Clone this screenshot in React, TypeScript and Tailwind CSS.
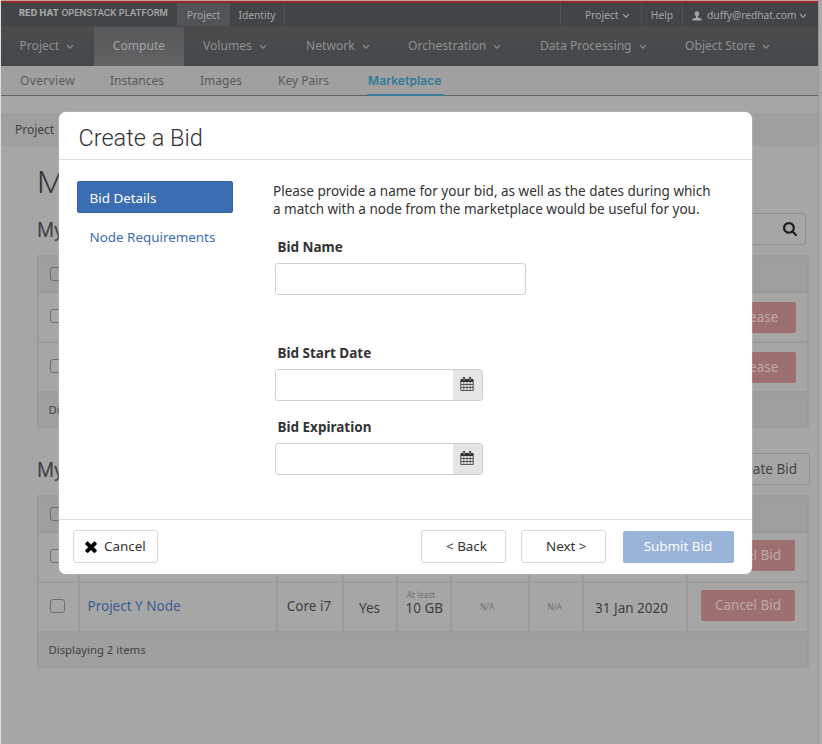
import React from 'react';
import { clsx } from 'clsx';

function Chevron({ className = '' }: { className?: string }) {
  return (
    <svg className={clsx('h-[6px] w-[8px] shrink-0', className)} viewBox="0 0 8 6" fill="none" stroke="currentColor" strokeWidth="1.2">
      <path d="M1 1.2 4 4.2 7 1.2" />
    </svg>
  );
}

function CalendarIcon() {
  return (
    <svg className="h-[14px] w-[14px] text-[#333]" viewBox="0 0 14 14">
      <path
        fill="currentColor"
        fillRule="evenodd"
        d="M1.4 1.9H2.7V1.5Q2.7.1 4 .1T5.3 1.5V1.9H8.7V1.5Q8.7.1 10 .1T11.3 1.5V1.9H12.6Q13.6 1.9 13.6 2.9V13Q13.6 14 12.6 14H1.4Q.4 14 .4 13V2.9Q.4 1.9 1.4 1.9ZM3.6 1.3V3.3H4.4V1.3ZM9.6 1.3V3.3H10.4V1.3ZM1.3 5V7.3H3.6V5ZM4.2 5V7.3H6.7V5ZM7.3 5V7.3H9.8V5ZM10.4 5V7.3H12.7V5ZM1.3 7.9V10.3H3.6V7.9ZM4.2 7.9V10.3H6.7V7.9ZM7.3 7.9V10.3H9.8V7.9ZM10.4 7.9V10.3H12.7V7.9ZM1.3 10.9V13.2H3.6V10.9ZM4.2 10.9V13.2H6.7V10.9ZM7.3 10.9V13.2H9.8V10.9ZM10.4 10.9V13.2H12.7V10.9Z"
      />
    </svg>
  );
}

function SearchIcon() {
  return (
    <svg className="h-[14px] w-[14px] text-[#1f1f1f]" viewBox="64 128 1664 1664" fill="currentColor">
      <path d="M1216 832q0-185-131.5-316.5t-316.5-131.5-316.5 131.5-131.5 316.5 131.5 316.5 316.5 131.5 316.5-131.5 131.5-316.5zm512 832q0 52-38 90t-90 38q-54 0-90-38l-343-342q-179 124-399 124-143 0-273.5-55.5t-225-150-150-225-55.5-273.5 55.5-273.5 150-225 225-150 273.5-55.5 273.5 55.5 225 150 150 225 55.5 273.5q0 220-124 399l343 343q37 37 37 90z" />
    </svg>
  );
}

function CloseIcon() {
  return (
    <svg className="h-[12px] w-[12px] text-black" viewBox="260 300 1270 1270" fill="currentColor" stroke="currentColor" strokeWidth="50">
      <path d="M1490 1322q0 40-28 68l-136 136q-28 28-68 28t-68-28l-294-294-294 294q-28 28-68 28t-68-28l-136-136q-28-28-28-68t28-68l294-294-294-294q-28-28-28-68t28-68l136-136q28-28 68-28t68 28l294 294 294-294q28-28 68-28t68 28l136 136q28 28 28 68t-28 68l-294 294 294 294q28 28 28 68z" />
    </svg>
  );
}

function UserIcon() {
  return (
    <svg className="h-[10px] w-[10px]" viewBox="0 0 10 10" fill="currentColor">
      <path d="M5 .2C6.5.2 7.2 1.2 7.2 2.5 7.2 3.9 6.6 4.9 5.9 5.3V6.6L8.8 7.4Q9.6 7.7 9.6 8.5V9.5H.4V8.5Q.4 7.7 1.2 7.4L4.1 6.6V5.3C3.4 4.9 2.8 3.9 2.8 2.5 2.8 1.2 3.5.2 5 .2Z" />
    </svg>
  );
}

function TopBar() {
  return (
    <div className="flex h-[23px] items-stretch bg-[#414547] text-[10.25px] text-[#a3a4a5]">
      <div className="flex w-[176px] items-center gap-[2.5px] whitespace-nowrap pb-[3px] pl-[18px] font-['Inter',sans-serif] text-[9px] text-[#a5a6a6]">
        <span className="font-extrabold tracking-[0.15px]">RED HAT</span>
        <span className="font-semibold">OPENSTACK PLATFORM</span>
      </div>
      <div className="flex w-[53px] items-center justify-center bg-[#505457] pt-[2px]">Project</div>
      <div className="flex w-[55px] items-center justify-center border-r border-[#4d5153] pt-[2px]">Identity</div>
      <div className="ml-auto flex w-[82px] items-center border-x border-[#4d5153] pt-[2px] pl-[24px]">
        Project
        <Chevron className="ml-1" />
      </div>
      <div className="flex w-[41px] items-center justify-center border-r border-[#4d5153] pt-[2px]">Help</div>
      <div className="flex w-[135px] items-center pt-[2px] pl-[9px]">
        <UserIcon />
        <span className="ml-[5px]">duffy@redhat.com</span>
        <Chevron className="ml-[3px]" />
      </div>
    </div>
  );
}

const menus = [
  { label: 'Volumes', width: 'w-[103px]' },
  { label: 'Network', width: 'w-[102px]' },
  { label: 'Orchestration', width: 'w-[132px]' },
  { label: 'Data Processing', width: 'w-[145px]' },
  { label: 'Object Store', width: 'w-[100px]' },
];

function MainNav() {
  return (
    <div className="flex h-[40px] items-stretch overflow-hidden border-t border-[#47494a] bg-linear-to-b from-[#4b4b4c] to-[#43484b] text-[12.1px] text-[#8e9091]">
      <div className="flex w-[93px] items-center pl-[18.5px]">
        Project
        <Chevron className="ml-[7px]" />
      </div>
      <div className="mr-[19px] flex w-[90px] items-center justify-center bg-linear-to-b from-[#575859] to-[#626365] text-[#a1a2a2]">Compute</div>
      {menus.map((m) => (
        <div key={m.label} className={clsx('flex items-center whitespace-nowrap', m.width)}>
          {m.label}
          <Chevron className="ml-[7px]" />
        </div>
      ))}
    </div>
  );
}

function SubNav() {
  return (
    <div className="flex h-[30px] items-center border-b border-[#616465] bg-[#a0a0a0] pl-[19px] text-[12px] text-[#585b5d]">
      <span className="w-[90px] tracking-[0.35px]">Overview</span>
      <span className="w-[90px]">Instances</span>
      <span className="w-[78px]">Images</span>
      <span className="w-[89px]">Key Pairs</span>
      <span className="-mb-px flex h-[30px] w-[77px] items-center border-b-2 border-[#3b7c99] pt-px pl-px font-['Inter',sans-serif] font-semibold tracking-[0.1px] text-[#34799a]">
        Marketplace
      </span>
    </div>
  );
}

function Checkbox() {
  return <span className="block h-[14px] w-[15px] rounded-[3px] border border-[#707070]" />;
}

function CheckCell() {
  return (
    <div className="flex w-[41px] items-center border-r-2 border-[#9b9b9b] pb-0.5 pl-[11px]">
      <Checkbox />
    </div>
  );
}

function RowButton({ children, className }: { children: string; className: string }) {
  return (
    <span className={clsx('flex h-[31px] items-center justify-center rounded-[2px] bg-[#9d6f6e] text-[13.5px] text-[#bcaaaa]', className)}>
      {children}
    </span>
  );
}

function TableFooter() {
  return <div className="flex h-[33px] items-center bg-[#9f9f9f] pt-px pl-[9.5px] text-[11.3px] text-[#434343]">Displaying 2 items</div>;
}

function NodesTable() {
  return (
    <div className="mt-[10px] flex h-[173px] w-[772px] flex-col border-2 border-[#9b9b9b]">
      <div className="flex h-[36px] border-b-2 border-[#989898] bg-[#9f9f9f]">
        <div className="flex w-[40px] items-center pl-[11px]">
          <Checkbox />
        </div>
      </div>
      {[0, 1].map((i) => (
        <div key={i} className="flex h-[50px] border-b-2 border-[#9b9b9b]">
          <CheckCell />
          <div className="ml-auto flex items-center pt-px pr-[11px]">
            <RowButton className="w-[84px]">Release</RowButton>
          </div>
        </div>
      ))}
      <TableFooter />
    </div>
  );
}

type Bid = { name?: string; cpu?: string; gpu?: string; memory?: string; disk?: string; nics?: string; expires?: string };

const bids: Bid[] = [
  {},
  { name: 'Project Y Node', cpu: 'Core i7', gpu: 'Yes', memory: '10 GB', disk: 'N/A', nics: 'N/A', expires: '31 Jan 2020' },
];

function BidsTable() {
  return (
    <div className="mt-[10px] flex h-[173px] w-[772px] flex-col border-2 border-[#9b9b9b]">
      <div className="flex h-[36px] border-b-2 border-[#989898] bg-[#9f9f9f] text-[13.5px] text-[#434343]">
        <div className="flex w-[40px] items-center pl-[11px]">
          <Checkbox />
        </div>
        <div className="ml-auto flex w-[113px] items-center pl-[11px]">Actions</div>
      </div>
      {bids.map((bid, i) => (
        <div key={i} className="flex h-[50px] border-b-2 border-[#9b9b9b] text-[13.5px] text-[#3f3f3f]">
          <CheckCell />
          <div className="flex w-[198px] items-center border-r-2 border-[#9b9b9b] pb-px pl-[7.5px] text-[#3d5d8c]">{bid.name}</div>
          <div className="flex w-[66px] items-center justify-center border-r-2 border-[#9b9b9b] pr-[2px] pb-px">{bid.cpu}</div>
          <div className="flex w-[54px] items-center justify-center border-r-2 border-[#9b9b9b] pt-[3px] pr-px">{bid.gpu}</div>
          <div className="flex w-[54px] flex-col border-r-2 border-[#9b9b9b] pt-[6px] pl-[7.5px]">
            {bid.memory && (
              <>
                <span className="pl-[1.5px] text-[8px] leading-[11px] text-[#707070]">At least</span>
                <span className="leading-[16px]">{bid.memory}</span>
              </>
            )}
          </div>
          <div className="flex w-[78px] items-center justify-center border-r-2 border-[#9b9b9b] pr-[6px] pb-px text-[8px] text-[#707070]">{bid.disk}</div>
          <div className="flex w-[54px] items-center justify-center border-r-2 border-[#9b9b9b] pr-[3px] pb-px text-[8px] text-[#707070]">{bid.nics}</div>
          <div className="flex w-[104px] items-center border-r-2 border-[#9b9b9b] pt-[3px] pl-[11px]">{bid.expires}</div>
          <div className="ml-auto flex items-start pt-[7px] pr-[12px]">
            <RowButton className="w-[94px]">Cancel Bid</RowButton>
          </div>
        </div>
      ))}
      <TableFooter />
    </div>
  );
}

function Field({ label, date = false }: { label: string; date?: boolean }) {
  return (
    <div>
      <div className="h-[26px] pl-[2.5px] text-[13.5px] leading-[20px] font-bold">{label}</div>
      <div className={clsx('flex h-[32px] justify-end overflow-hidden rounded-[3px] border border-[#d0d0d0] bg-white', date ? 'w-[208px]' : 'w-[251px]')}>
        {date && (
          <div className="flex w-[29px] items-center justify-center bg-[#e5e5e5] pr-px pb-[3px]">
            <CalendarIcon />
          </div>
        )}
      </div>
    </div>
  );
}

function Modal() {
  return (
    <div className="absolute top-[112px] left-[59px] flex h-[462px] w-[693px] flex-col rounded-[7px] bg-white text-[13.5px] text-[#333] shadow-[0_0_2px_rgba(255,255,255,0.5)]">
      <div className="flex h-[48px] items-center border-b border-[#e0e0e0] pt-[6px] pl-[19.5px] font-['Roboto',sans-serif] text-[23.5px] font-light">
        Create a Bid
      </div>
      <div className="flex h-[359px]">
        <div className="flex w-[216px] flex-col pt-[21px] pl-[18px] text-[13.4px]">
          <div className="flex h-[32px] w-[156px] items-center rounded-[2px] border border-[#3465ad] bg-[#3b6db3] pt-[2px] pl-[11.5px] text-white">Bid Details</div>
          <div className="mt-2 flex h-[32px] items-center pl-[12.5px] text-[#3b6db3]">Node Requirements</div>
        </div>
        <div className="flex-1 pt-[23px]">
          <p className="-ml-[2px] text-[13.5px] leading-[17.6px] whitespace-nowrap">
            Please provide a name for your bid, as well as the dates during which
            <br />a match with a node from the marketplace would be useful for you.
          </p>
          <div className="mt-[19px]">
            <Field label="Bid Name" />
          </div>
          <div className="mt-[48px]">
            <Field label="Bid Start Date" date />
          </div>
          <div className="mt-[16px]">
            <Field label="Bid Expiration" date />
          </div>
        </div>
      </div>
      <div className="flex h-[55px] items-center border-t border-[#e0e0e0] pr-[18px] pb-px pl-[14px] text-[13.4px]">
        <div className="flex h-[33px] w-[85px] items-center rounded-[3px] border border-[#d8d8d8] pl-[10.5px]">
          <CloseIcon />
          <span className="ml-[7.5px]">Cancel</span>
        </div>
        <div className="ml-auto flex h-[33px] w-[85px] items-center rounded-[3px] border border-[#d8d8d8] pl-[24px] whitespace-nowrap">&lt; Back</div>
        <div className="ml-[15px] flex h-[33px] w-[85px] items-center rounded-[3px] border border-[#d8d8d8] pl-[24px] whitespace-nowrap">Next &gt;</div>
        <div className="mt-px ml-[17px] flex h-[32px] w-[111px] items-center justify-center rounded-[2px] bg-[#9ab3d8] pr-px pb-px text-white">Submit Bid</div>
      </div>
    </div>
  );
}

export default function App() {
  return (
    <div className="relative flex h-[744px] w-[822px] overflow-hidden bg-[#a9a9a9] font-['Noto_Sans','Open_Sans',sans-serif]">
      <div className="w-px bg-[#e0e0e0]" />
      <div className="flex w-[817px] flex-col bg-[#a6a6a6]">
        <div className="h-px shrink-0 bg-[#c9a0a0]" />
        <div className="h-[2px] shrink-0 bg-[#902a28]" />
        <TopBar />
        <MainNav />
        <SubNav />
        <div className="mt-[17px] flex h-[33px] items-center bg-[#9f9f9f] pt-px pl-[14px] text-[12px] text-[#404040]">Project</div>
        <div className="flex flex-col pl-[36px]">
          <h1 className="mt-[17px] h-[40px] font-['Roboto',sans-serif] text-[32px] leading-[39px] font-light text-[#363636]">Marketplace</h1>
          <div className="mt-[10px] flex h-[32px] w-[769px] items-center justify-between font-['Roboto',sans-serif] text-[19.5px] text-[#434343]">
            <span className="pt-[3px]">My Nodes</span>
            <div className="flex h-[32px] w-[210px] items-center justify-end rounded-[3px] border border-[#8f8f8f] pr-[8px]">
              <SearchIcon />
            </div>
          </div>
          <NodesTable />
          <div className="mt-[25px] flex h-[32px] w-[773px] items-center justify-between text-[#434343]">
            <span className="pt-[3px] font-['Roboto',sans-serif] text-[19.5px]">My Bids</span>
            <div className="flex h-[32px] w-[100px] items-center justify-end rounded-[3px] border border-[#8f8f8f] pr-[12px] text-[13.5px]">Create Bid</div>
          </div>
          <BidsTable />
        </div>
      </div>
      <div className="w-px bg-[#999]" />
      <Modal />
    </div>
  );
}
